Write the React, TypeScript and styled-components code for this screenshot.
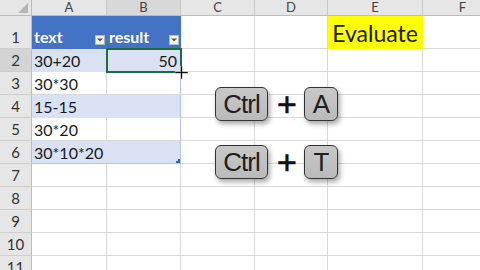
import React from 'react';
import styled, { createGlobalStyle, css } from 'styled-components';

const GlobalStyle = createGlobalStyle`
  html, body { margin: 0; padding: 0; background: #ffffff; overflow: hidden; }
  body { width: 480px; height: 270px; font-family: 'Lato', 'Liberation Sans', sans-serif; }
`;

const COLS = ['A', 'B', 'C', 'D', 'E', 'F'];
const ROW_COUNT = 11;

const Stage = styled.div`
  position: relative;
  width: 480px;
  height: 270px;
  overflow: hidden;
`;

const Sheet = styled.div`
  display: grid;
  grid-template-columns: 32px 75px 74px 74px 73px 95px 80px;
  grid-template-rows: 16px 33px repeat(${ROW_COUNT - 1}, 23px);
`;

const Corner = styled.div`
  background: #e6e6e6;
  border-right: 1px solid #bcbcbc;
  border-bottom: 1px solid #bcbcbc;
  box-sizing: border-box;
  display: flex;
  align-items: flex-end;
  justify-content: flex-end;
  padding: 0 3px 2px 0;
  svg { display: block; }
`;

const ColHead = styled.div<{ $active?: boolean }>`
  background: ${p => (p.$active ? '#d8d8d8' : '#e6e6e6')};
  border-right: 1px solid #c8c8c8;
  border-bottom: 1px solid #bcbcbc;
  box-sizing: border-box;
  color: #444;
  font-size: 13px;
  line-height: 15px;
  text-align: center;
`;

const RowHead = styled.div<{ $active?: boolean }>`
  background: ${p => (p.$active ? '#d4d4d4' : '#e6e6e6')};
  border-right: 1px solid #bcbcbc;
  border-bottom: 1px solid #cfcfcf;
  box-sizing: border-box;
  color: #333;
  font-size: 15px;
  display: flex;
  align-items: flex-end;
  justify-content: center;
  padding-bottom: 2px;
`;

type Tone = 'plain' | 'head' | 'band' | 'white' | 'yellow';

const Cell = styled.div<{ $tone: Tone; $edge?: boolean; $right?: boolean; $selected?: boolean; $last?: boolean }>`
  position: relative;
  box-sizing: border-box;
  border-right: 1px solid #d9d9d9;
  border-bottom: 1px solid #d9d9d9;
  display: flex;
  align-items: flex-end;
  justify-content: ${p => (p.$right ? 'flex-end' : 'flex-start')};
  padding: 0 3px 1px 2px;
  font-size: 16px;
  color: #1a1a1a;
  white-space: nowrap;

  ${p => p.$tone === 'head' && css`
    background: #4472c4;
    border-color: #4472c4;
    color: #ffffff;
    font-weight: 700;
    justify-content: space-between;
    padding: 0 1px 2px 2px;
  `}
  ${p => p.$tone === 'band' && css`
    background: #d9e1f2;
    border-right-color: #d9e1f2;
    border-bottom-color: #d9e1f2;
  `}
  ${p => p.$tone === 'yellow' && css`
    background: #ffff00;
    border-color: #ffff00;
    font-size: 23px;
    justify-content: center;
    align-items: center;
    padding: 2px 0 0 0;
  `}
  ${p => p.$edge && css`border-right-color: #b4c6e7;`}
  ${p => p.$last && css`border-bottom-color: #b4c6e7;`}
  ${p => p.$selected && css`
    outline: 2px solid #1e6b41;
    outline-offset: -1px;
    z-index: 2;
  `}
`;

const Filter = styled.span`
  width: 10px;
  height: 10px;
  box-sizing: border-box;
  background: #f2f2f2;
  border: 1px solid #b8b8b8;
  display: flex;
  align-items: center;
  justify-content: center;
  margin-bottom: 1px;
  svg { display: block; }
`;

const Handle = styled.span`
  position: absolute;
  right: 0;
  bottom: 0;
  width: 4px;
  height: 4px;
  border-right: 2px solid #3b5ca8;
  border-bottom: 2px solid #3b5ca8;
  box-sizing: border-box;
`;

const Cursor = styled.svg`
  position: absolute;
  left: 175px;
  top: 66px;
  z-index: 5;
`;

const Keys = styled.div`
  position: absolute;
  left: 215px;
  top: 87px;
  display: flex;
  flex-direction: column;
  gap: 24px;
  z-index: 4;
`;

const Combo = styled.div`
  display: flex;
  align-items: center;
  gap: 9px;
`;

const Key = styled.div<{ $w: number }>`
  width: ${p => p.$w}px;
  height: 34px;
  box-sizing: border-box;
  border: 1.5px solid #333;
  border-radius: 6px;
  background: linear-gradient(#c8c8c8, #bababa);
  box-shadow: 2px 3px 5px rgba(0, 0, 0, 0.35);
  display: flex;
  align-items: center;
  justify-content: center;
  font-family: 'Liberation Sans', Arial, sans-serif;
  font-size: 26px;
  letter-spacing: -1px;
  color: #1e1e1e;
  padding-top: 1px;
`;

const Plus = styled.span`
  font-family: 'Liberation Sans', Arial, sans-serif;
  font-size: 34px;
  color: #111;
  line-height: 1;
  width: 18px;
  text-align: center;
  -webkit-text-stroke: 0.6px #111;
`;

const Arrow = () => (
  <svg width="6" height="4" viewBox="0 0 6 4"><path d="M0 0.5h6L3 3.5z" fill="#555" /></svg>
);

const tableRows: { a: string; b?: string; band: boolean }[] = [
  { a: '30+20', b: '50', band: true },
  { a: '30*30', band: false },
  { a: '15-15', band: true },
  { a: '30*20', band: false },
  { a: '30*10*20', band: true },
];

export default function App() {
  const rows: React.ReactNode[] = [];
  for (let r = 1; r <= ROW_COUNT; r++) {
    rows.push(<RowHead key={`h${r}`} $active={r === 2}>{r}</RowHead>);
    for (let c = 0; c < 6; c++) {
      const key = `c${r}-${c}`;
      if (r === 1 && c < 2) {
        rows.push(
          <Cell key={key} $tone="head">
            <span>{c === 0 ? 'text' : 'result'}</span>
            <Filter><Arrow /></Filter>
          </Cell>
        );
      } else if (r === 1 && c === 4) {
        rows.push(<Cell key={key} $tone="yellow">Evaluate</Cell>);
      } else if (r >= 2 && r <= 6 && c < 2) {
        const d = tableRows[r - 2];
        rows.push(
          <Cell
            key={key}
            $tone={d.band ? 'band' : 'white'}
            $edge={c === 1}
            $last={r === 6}
            $right={c === 1}
            $selected={r === 2 && c === 1}
          >
            {c === 0 ? d.a : d.b}
            {r === 6 && c === 1 && <Handle />}
          </Cell>
        );
      } else {
        rows.push(<Cell key={key} $tone="plain" />);
      }
    }
  }

  return (
    <>
      <GlobalStyle />
      <Stage>
        <Sheet>
          <Corner>
            <svg width="10" height="10" viewBox="0 0 10 10"><path d="M10 0V10H0z" fill="#b5b5b5" /></svg>
          </Corner>
          {COLS.map(c => <ColHead key={c} $active={c === 'B'}>{c}</ColHead>)}
          {rows}
        </Sheet>

        <Cursor width="13" height="13" viewBox="0 0 13 13">
          <path d="M5.5 0h2v5.5H13v2H7.5V13h-2V7.5H0v-2h5.5z" fill="#111" stroke="#fff" strokeWidth="0.6" />
        </Cursor>

        <Keys>
          <Combo>
            <Key $w={53}>Ctrl</Key>
            <Plus>+</Plus>
            <Key $w={34}>A</Key>
          </Combo>
          <Combo>
            <Key $w={53}>Ctrl</Key>
            <Plus>+</Plus>
            <Key $w={34}>T</Key>
          </Combo>
        </Keys>
      </Stage>
    </>
  );
}
